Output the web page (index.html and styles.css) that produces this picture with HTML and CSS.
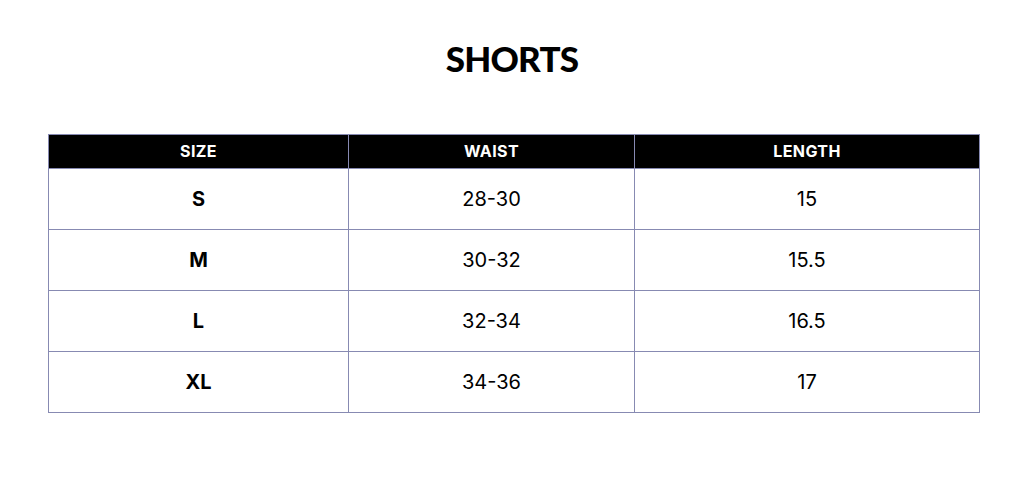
FILE: index.html
```html
<!DOCTYPE html>
<html>
<head>
<meta charset="utf-8">
<link rel="stylesheet" href="styles.css">
</head>
<body>
<main class="page">
  <h1 class="title">SHORTS</h1>
  <table class="chart">
    <colgroup>
      <col class="c1"><col class="c2"><col class="c3">
    </colgroup>
    <thead>
      <tr><th>SIZE</th><th>WAIST</th><th>LENGTH</th></tr>
    </thead>
    <tbody>
      <tr><td class="size">S</td><td>28-30</td><td>15</td></tr>
      <tr><td class="size">M</td><td>30-32</td><td>15.5</td></tr>
      <tr><td class="size">L</td><td>32-34</td><td>16.5</td></tr>
      <tr><td class="size">XL</td><td>34-36</td><td>17</td></tr>
    </tbody>
  </table>
</main>
</body>
</html>
```
FILE: styles.css
```css
html, body {
  margin: 0;
  padding: 0;
  background: #ffffff;
}
.page {
  width: 1024px;
  height: 478px;
  padding-top: 36px;
  box-sizing: border-box;
  font-family: "Inter", "Liberation Sans", sans-serif;
  color: #000;
}
.title {
  margin: 0;
  height: 98px;
  text-align: center;
  font-family: "Lato", "Inter", sans-serif;
  font-weight: 900;
  font-size: 35px;
  line-height: 44px;
  letter-spacing: -0.8px;
}
.chart {
  margin-left: 48px;
  width: 931px;
  border-collapse: collapse;
  table-layout: fixed;
}
.c1 { width: 300px; }
.c2 { width: 286px; }
.c3 { width: 345px; }
.chart th, .chart td {
  border: 1px solid #878ab2;
  text-align: center;
  padding: 0;
}
.chart th {
  background: #000;
  color: #fff;
  height: 32px;
  padding-bottom: 1px;
  font-weight: 700;
  font-size: 16px;
  letter-spacing: 0.4px;
}
.chart td {
  height: 60px;
  font-size: 20px;
  font-weight: 400;
}
.chart td.size {
  font-weight: 700;
}
```
